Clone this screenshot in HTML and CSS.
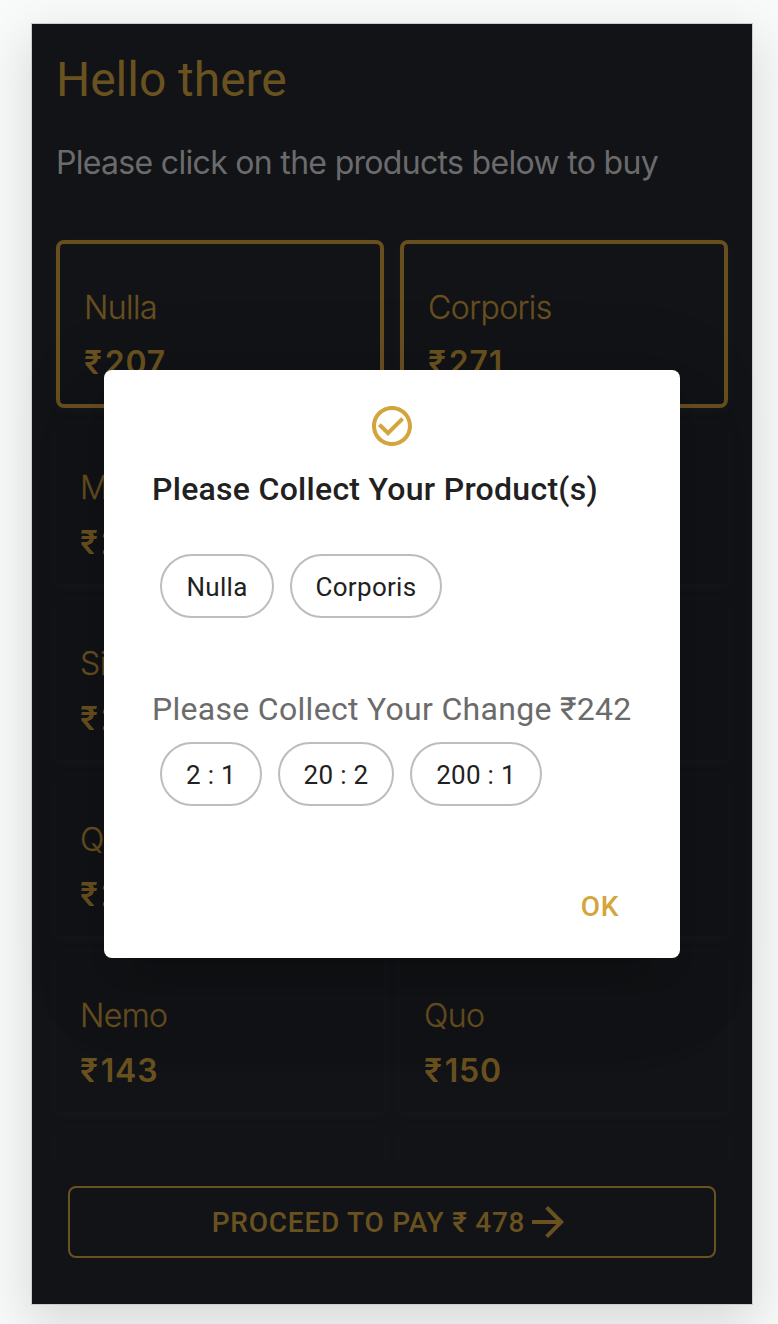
FILE: index.html
```html
<!DOCTYPE html>
<html lang="en">
<head>
<meta charset="utf-8">
<title>Vending machine</title>
<link rel="stylesheet" href="styles.css">
</head>
<body>
<main class="window">
  <h1 class="title">Hello there</h1>
  <p class="subtitle">Please click on the products below to buy</p>
  <section class="products">
    <article class="card selected"><span class="name">Nulla</span><span class="price"><span class="rupee">₹</span>207</span></article>
    <article class="card selected"><span class="name">Corporis</span><span class="price"><span class="rupee">₹</span>271</span></article>
    <article class="card"><span class="name">M</span><span class="price"><span class="rupee">₹</span>2</span></article>
    <article class="card"></article>
    <article class="card"><span class="name">Si</span><span class="price"><span class="rupee">₹</span>2</span></article>
    <article class="card"></article>
    <article class="card"><span class="name">Q</span><span class="price"><span class="rupee">₹</span>2</span></article>
    <article class="card"></article>
    <article class="card"><span class="name">Nemo</span><span class="price"><span class="rupee">₹</span>143</span></article>
    <article class="card"><span class="name">Quo</span><span class="price"><span class="rupee">₹</span>150</span></article>
    <article class="card"></article>
    <article class="card"></article>
  </section>
  <button class="pay"><span class="pay-label">PROCEED TO PAY ₹ 478</span>
    <svg class="arrow" viewBox="0 0 24 24"><path d="m12 4-1.41 1.41L16.17 11H4v2h12.17l-5.58 5.59L12 20l8-8z"/></svg>
  </button>
  <div class="dialog" role="dialog">
    <svg class="check" viewBox="0 0 24 24"><path d="M16.59 7.58 10 14.17l-3.59-3.58L5 12l5 5 8-8zM12 2C6.48 2 2 6.48 2 12s4.48 10 10 10 10-4.48 10-10S17.52 2 12 2zm0 18c-4.42 0-8-3.58-8-8s3.58-8 8-8 8 3.58 8 8-3.58 8-8 8z"/></svg>
    <h2 class="dialog-title">Please Collect Your Product(s)</h2>
    <div class="chips">
      <span class="chip w-nulla">Nulla</span><span class="chip w-corporis">Corporis</span>
    </div>
    <p class="change">Please Collect Your Change ₹242</p>
    <div class="chips coins">
      <span class="chip w-2">2 : 1</span><span class="chip w-20">20 : 2</span><span class="chip w-200">200 : 1</span>
    </div>
    <button class="ok">OK</button>
  </div>
</main>
</body>
</html>
```
FILE: styles.css
```css
* { box-sizing: border-box; }
html { height: 100%; }
body {
  margin: 0;
  height: 1324px;
  padding: 24px 26px 20px 32px;
  background: #f9fbfa;
  overflow: hidden;
  font-family: Roboto, "Noto Sans", sans-serif;
}
.window {
  position: relative;
  display: flex;
  flex-direction: column;
  width: 720px;
  height: 1280px;
  background: #121317;
  box-shadow: 0 0 0 1px #cbcdcc, 0 18px 50px 6px rgba(0, 0, 0, .13);
}
.title {
  margin: 24px 24px 0;
  font-size: 48px;
  font-weight: 400;
  line-height: 64px;
  letter-spacing: -.04px;
  color: #6a5220;
}
.subtitle {
  margin: 31px 24px 0;
  font-family: Inter, sans-serif;
  font-size: 32px;
  line-height: 40px;
  letter-spacing: -.69px;
  color: #6b6b6c;
  white-space: nowrap;
}
.products {
  display: grid;
  grid-template-columns: 328px 328px;
  grid-auto-rows: 160px;
  grid-template-rows: 168px;
  gap: 16px;
  height: 950px;
  margin-top: 25px;
  padding: 32px 24px 0;
  overflow: hidden;
}
.card {
  display: flex;
  flex-direction: column;
  padding: 41px 24px 0;
  background: #111316;
  box-shadow: 0 2px 14px rgba(255, 255, 255, .032);
  font-family: Inter, sans-serif;
  font-size: 32px;
  color: #684f20;
}
.selected {
  border: 4px solid #684f20;
  border-radius: 8px;
}
.name { line-height: 46px; font-weight: 300; letter-spacing: -.55px; -webkit-text-stroke: .3px currentColor; }
.price { margin-top: 9px; line-height: 46px; font-weight: 600; letter-spacing: .8px; color: #69511f; }
.rupee { margin-right: 2px; }
.pay {
  display: flex;
  align-items: center;
  justify-content: center;
  width: 648px;
  height: 72px;
  margin: 28px 36px 0;
  padding: 0;
  border: 2px solid #6a5220;
  border-radius: 8px;
  background: none;
  font: 500 28px/48px Roboto, sans-serif;
  letter-spacing: .76px;
  color: #6a5220;
}
.pay-label { padding-top: 2px; }
.arrow { width: 48px; height: 48px; margin-left: -1px; fill: currentColor; }
.dialog {
  position: absolute;
  left: 72px;
  top: 346px;
  display: flex;
  flex-direction: column;
  width: 576px;
  height: 588px;
  padding: 32px 48px 0;
  border-radius: 8px;
  background: #fff;
  box-shadow: 0 22px 30px -14px rgba(0,0,0,.12), 0 48px 76px 6px rgba(0,0,0,.08), 0 18px 92px 16px rgba(0,0,0,.07);
  color: #212121;
}
.check { align-self: center; width: 48px; height: 48px; fill: #d4a53c; }
.dialog-title {
  margin: 15px 0 0;
  font-size: 32px;
  font-weight: 500;
  line-height: 48px;
  letter-spacing: .28px;
  white-space: nowrap;
}
.chips { display: flex; gap: 16px; margin: 41px 8px 0; }
.chip {
  display: flex;
  align-items: center;
  justify-content: center;
  height: 64px;
  padding-top: 2px;
  border: 2px solid #bdbdbd;
  border-radius: 32px;
  font-size: 26px;
  letter-spacing: .3px;
  white-space: nowrap;
}
.w-nulla { width: 114px; }
.w-corporis { width: 152px; }
.w-2 { width: 102px; }
.w-20 { width: 116px; }
.w-200 { width: 132px; }
.change {
  margin: 67px 0 0;
  font-size: 32px;
  line-height: 48px;
  letter-spacing: .3px;
  color: #6b6b6b;
  white-space: nowrap;
}
.coins { margin-top: 9px; }
.ok {
  align-self: flex-end;
  width: 70px;
  margin: 77px -3px 0 0;
  padding: 0;
  border: 0;
  background: none;
  font: 500 28px/48px Roboto, sans-serif;
  letter-spacing: .8px;
  color: #d4a53c;
}
```
